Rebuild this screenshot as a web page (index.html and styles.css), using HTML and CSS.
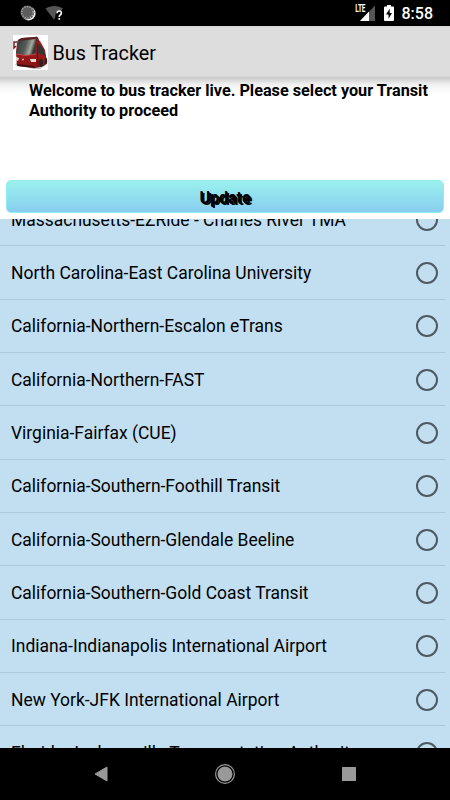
FILE: index.html
```html
<!DOCTYPE html>
<html lang="en">
<head>
    <meta charset="UTF-8">
    <meta name="viewport" content="width=device-width, initial-scale=1.0">
    <title>Bus Tracker</title>
    <link rel="stylesheet" href="styles.css">
</head>
<body>
    <div class="status-bar">
        <svg class="sync-icon" width="16" height="16" viewBox="0 0 16 16">
            <circle cx="8.6" cy="8.4" r="7" fill="#f4f4f4"/>
            <circle cx="7.4" cy="7.3" r="6.9" fill="#5c5c5c"/>
            <circle cx="7.4" cy="7.3" r="5.7" fill="none" stroke="#b5b5b5" stroke-width="1.4" stroke-dasharray="1.2 1.36"/>
        </svg>
        <svg class="wifi-icon" width="20" height="16" viewBox="0 0 20 16">
            <path d="M0.5 3.5C5.5 0 13 0 18 3.5L15.5 6.5H11L10 13L9 14.5Z" fill="#555"/>
            <path d="M12 8.2C12.1 5.2 16.6 5.3 16.4 8.1C16.3 9.9 14.2 9.9 14.2 12" fill="none" stroke="#fff" stroke-width="1.6"/>
            <rect x="13.4" y="13" width="1.7" height="1.8" fill="#fff"/>
        </svg>
        <div class="status-right">
            <span class="lte">LTE</span>
            <svg class="signal-icon" width="15" height="16" viewBox="0 0 15 16">
                <path d="M0 16L15 0.5V16Z" fill="#555"/>
                <path d="M0 16L9 6.5V16Z" fill="#fff"/>
            </svg>
            <svg class="battery-icon" width="10" height="16" viewBox="0 0 10 16">
                <path d="M3 0H7V1.5H9Q10 1.5 10 2.5V15Q10 16 9 16H1Q0 16 0 15V2.5Q0 1.5 1 1.5H3Z" fill="#fff"/>
                <path d="M5.7 3.8L2 9.4H4.5V13.7L8 8.1H5.7Z" fill="#000"/>
            </svg>
            <span class="clock">8:58</span>
        </div>
    </div>

    <div class="action-bar">
        <svg class="app-icon" width="35" height="35" viewBox="0 0 35 35">
            <defs>
                <linearGradient id="glass" x1="0" y1="0" x2="1" y2="0.25">
                    <stop offset="0" stop-color="#303637"/>
                    <stop offset="0.55" stop-color="#555b58"/>
                    <stop offset="0.82" stop-color="#a5aaa2"/>
                    <stop offset="1" stop-color="#343636"/>
                </linearGradient>
                <linearGradient id="body" x1="0" y1="0" x2="0" y2="1">
                    <stop offset="0" stop-color="#b22322"/>
                    <stop offset="1" stop-color="#851414"/>
                </linearGradient>
            </defs>
            <rect width="35" height="35" fill="#fff"/>
            <path d="M2 30L21 34H27L34 29L31 27H4Z" fill="#bbb"/>
            <path d="M3 18L4 7Q5 4 9 3L22 2L27 6L32 15L34 28L31 31L22 33L4 31Z" fill="url(#body)"/>
            <path d="M4 7Q5 4 9 3L22 2L25 5L23 7L5 6Z" fill="#562020"/>
            <path d="M5 6L23 4L22 19Q12 21 3 19Z" fill="url(#glass)"/>
            <path d="M24 6L30 13L33 21L25 18Z" fill="#373435"/>
            <path d="M24 7L25 32" stroke="#621010"/>
            <path d="M3 19Q13 22 23 19" fill="none" stroke="#dc5752" stroke-width="0.7"/>
            <path d="M3 22L6 23L5 26L3 25Z M17 24L23 24L23 27L18 27Z" fill="#dedbd5"/>
            <path d="M5 29L21 31L22 33L5 31Z" fill="#3e1111"/>
            <ellipse cx="28" cy="28" rx="2" ry="4" fill="#252525"/>
            <ellipse cx="33" cy="26" rx="1.2" ry="3.3" fill="#252525"/>
            <circle cx="10" cy="24.5" r="1" fill="#e4a59f"/>
            <path d="M4 7H1V13L3 11" fill="none" stroke="#792020" stroke-width="1.5"/>
            <path d="M22 3Q24 1 25 5V10" fill="none" stroke="#792020" stroke-width="1.7"/>
        </svg>
        <h1 class="app-title">Bus Tracker</h1>
    </div>

    <div class="intro">
        <p class="welcome">Welcome to bus tracker live. Please select your Transit Authority to proceed</p>
        <button class="update-btn">Update</button>
    </div>

    <div class="agency-list">
        <div class="agency first"><span>Massachusetts-EZRide - Charles River TMA</span><i class="radio"></i></div>
        <div class="agency"><span>North Carolina-East Carolina University</span><i class="radio"></i></div>
        <div class="agency"><span>California-Northern-Escalon eTrans</span><i class="radio"></i></div>
        <div class="agency"><span>California-Northern-FAST</span><i class="radio"></i></div>
        <div class="agency"><span>Virginia-Fairfax (CUE)</span><i class="radio"></i></div>
        <div class="agency"><span>California-Southern-Foothill Transit</span><i class="radio"></i></div>
        <div class="agency"><span>California-Southern-Glendale Beeline</span><i class="radio"></i></div>
        <div class="agency"><span>California-Southern-Gold Coast Transit</span><i class="radio"></i></div>
        <div class="agency"><span>Indiana-Indianapolis International Airport</span><i class="radio"></i></div>
        <div class="agency"><span>New York-JFK International Airport</span><i class="radio"></i></div>
        <div class="agency"><span>Florida-Jacksonville Transportation Authority</span><i class="radio"></i></div>
    </div>

    <div class="nav-bar">
        <svg width="14" height="16" viewBox="0 0 14 16">
            <path d="M13 1V15L1 8Z" fill="#999" stroke="#999" stroke-linejoin="round"/>
        </svg>
        <svg width="20" height="20" viewBox="0 0 20 20">
            <circle cx="10" cy="10" r="9.4" fill="none" stroke="#999" stroke-width="1.2"/>
            <circle cx="10" cy="10" r="7.5" fill="#999"/>
        </svg>
        <svg width="14" height="14" viewBox="0 0 14 14">
            <rect width="14" height="14" rx="0.5" fill="#999"/>
        </svg>
    </div>
</body>
</html>
```

FILE: styles.css
```css
* {
    margin: 0;
    padding: 0;
    box-sizing: border-box;
    font-family: Roboto, sans-serif;
}

body {
    width: 450px;
    height: 800px;
    overflow: hidden;
    display: flex;
    flex-direction: column;
    background-color: #fff;
    color: #000;
}

.status-bar {
    height: 26px;
    flex-shrink: 0;
    display: flex;
    align-items: center;
    background-color: #000;
    padding: 0 17px 0 20px;
}

.wifi-icon {
    margin-left: 9px;
}

.status-right {
    display: flex;
    align-items: center;
    margin-left: auto;
    color: #fff;
}

.lte {
    align-self: flex-start;
    font-size: 10px;
    line-height: 10px;
    font-weight: bold;
    letter-spacing: -0.3px;
    transform: scaleX(0.65);
    transform-origin: right;
    margin-right: -6px;
}

.battery-icon {
    margin-left: 9px;
}

.clock {
    font-size: 16px;
    line-height: 18px;
    font-weight: 500;
    margin-left: 8px;
    padding-top: 1px;
}

.action-bar {
    height: 53px;
    flex-shrink: 0;
    display: flex;
    align-items: center;
    background: linear-gradient(#d4d4d4, #ddd 2px, #ddd 50px, #cdcdcd 51px, #cdcdcd);
    padding-left: 13px;
}

.app-title {
    font-size: 19.8px;
    font-weight: normal;
    margin-left: 4.5px;
    padding-top: 2px;
}

.intro {
    height: 140px;
    flex-shrink: 0;
    display: flex;
    flex-direction: column;
    justify-content: space-between;
    background: linear-gradient(#d2d2d2, #eee 5px, #fafafa 10px, #fff 15px);
    padding: 2px 6px 6px;
}

.welcome {
    font-size: 16.24px;
    line-height: 19.5px;
    font-weight: bold;
    padding-left: 23px;
}

.update-btn {
    height: 33px;
    border: 1px solid #8df0ee;
    border-radius: 5px;
    background: linear-gradient(#9af1ed, #88cdf0);
    padding-top: 2px;
    font-size: 16px;
    font-weight: 500;
    color: #000;
    text-shadow: 0.5px 0.5px 0 #000, 2px 2px 0 #000;
}

.agency-list {
    flex: 1;
    min-height: 0;
    overflow: hidden;
    background-color: #c2dff1;
}

.agency {
    height: 53.33px;
    display: flex;
    align-items: center;
    justify-content: space-between;
    border-bottom: 1px solid #adc8d9;
    margin-right: 5px;
    padding: 1px 7px 0 11px;
    font-size: 17.47px;
    white-space: nowrap;
}

.agency.first {
    margin-top: -26px;
}

.radio {
    width: 22px;
    height: 22px;
    border: 2px solid #4e5960;
    border-radius: 50%;
}

.nav-bar {
    height: 52px;
    flex-shrink: 0;
    display: flex;
    align-items: center;
    justify-content: center;
    gap: 107px;
    background-color: #000;
}
```
